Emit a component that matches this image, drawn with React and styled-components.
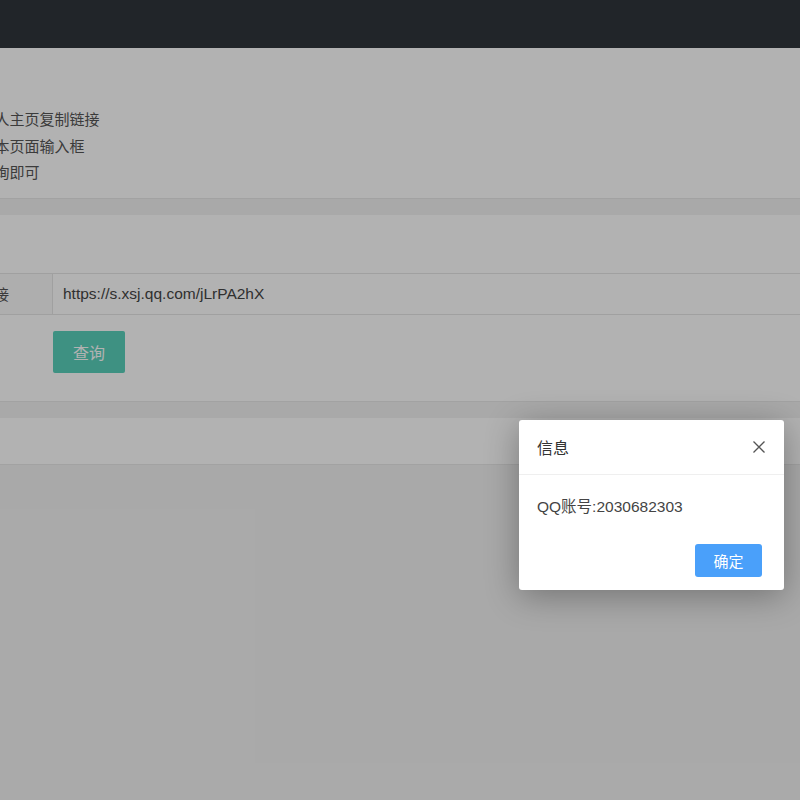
import styled, { createGlobalStyle } from "styled-components";

const GlobalStyle = createGlobalStyle`
  html, body {
    margin: 0;
    padding: 0;
    background: #f3f3f3;
    font-family: "Liberation Sans", "Noto Sans CJK SC", sans-serif;
    overflow: hidden;
  }
`;

const Page = styled.div`
  width: 800px;
  height: 800px;
  overflow: hidden;
  position: relative;
  background: #f3f3f3;
`;

const NavBar = styled.div`
  height: 48px;
  background: #30353b;
`;

const Cards = styled.div`
  display: flex;
  flex-direction: column;
  gap: 16px;
  margin-left: -78px;
  margin-right: -30px;
`;

const Card = styled.div`
  background: #fff;
  border-bottom: 1px solid #e8e8e8;
  padding: ${(p) => p.$pad || "0 15px"};
  min-height: ${(p) => p.$minHeight || "0"};
  box-sizing: border-box;
`;

const Steps = styled.div`
  color: #555;
  font-size: 15px;
  line-height: 26.5px;
`;

const InputGroup = styled.div`
  display: flex;
  height: 42px;
  border-top: 1px solid #e6e6e6;
  border-bottom: 1px solid #e6e6e6;
  box-sizing: border-box;
`;

const Addon = styled.div`
  width: 116px;
  flex: none;
  box-sizing: border-box;
  padding-left: 12px;
  display: flex;
  align-items: center;
  background: #fafafa;
  border-right: 1px solid #e6e6e6;
  color: #555;
  font-size: 15px;
`;

const Field = styled.div`
  flex: 1;
  display: flex;
  align-items: center;
  padding-left: 10px;
  color: #454545;
  font-size: 15.5px;
`;

const QueryButton = styled.button`
  margin: 16px 0 0 116px;
  width: 72px;
  height: 42px;
  border: none;
  border-radius: 2px;
  background: #59d0ba;
  color: #fff;
  font-family: "Noto Sans CJK SC", sans-serif;
  font-size: 16px;
  cursor: pointer;
`;

const Mask = styled.div`
  position: absolute;
  inset: 0;
  background: rgba(0, 0, 0, 0.3);
`;

const Dialog = styled.div`
  position: absolute;
  left: 519px;
  top: 420px;
  width: 265px;
  background: #fff;
  border-radius: 3px;
  box-shadow: 0 6px 34px rgba(0, 0, 0, 0.32);
`;

const DialogHead = styled.div`
  height: 55px;
  box-sizing: border-box;
  border-bottom: 1px solid #efefef;
  display: flex;
  align-items: center;
  justify-content: space-between;
  padding: 0 18px;
  color: #333;
  font-size: 16px;
  font-family: "Noto Sans CJK SC", sans-serif;
`;

const CloseBtn = styled.button`
  border: none;
  background: none;
  padding: 0;
  width: 14px;
  height: 14px;
  display: flex;
  cursor: pointer;
  margin-right: 0;
`;

const DialogBody = styled.div`
  padding: 20px 18px 0;
  color: #444;
  font-size: 15.5px;
  line-height: 24px;
`;

const DialogFoot = styled.div`
  display: flex;
  justify-content: flex-end;
  padding: 25px 22px 13px;
`;

const OkButton = styled.button`
  width: 67px;
  height: 33px;
  border: none;
  border-radius: 3px;
  background: #4aa0fa;
  color: #fff;
  font-family: "Noto Sans CJK SC", sans-serif;
  font-size: 15px;
  cursor: pointer;
`;

export default function App() {
  return (
    <Page>
      <GlobalStyle />
      <NavBar />
      <Cards>
        <Card $pad="59px 15px 11px">
          <Steps>
            <div>1.进入个人主页复制链接</div>
            <div>2.粘贴到本页面输入框</div>
            <div>3.点击查询即可</div>
          </Steps>
        </Card>
        <Card $pad="58px 15px 28px">
          <InputGroup>
            <Addon>分享链接</Addon>
            <Field>https://s.xsj.qq.com/jLrPA2hX</Field>
          </InputGroup>
          <QueryButton type="button">查询</QueryButton>
        </Card>
        <Card $minHeight="47px" />
      </Cards>
      <Mask />
      <Dialog>
        <DialogHead>
          <span>信息</span>
          <CloseBtn type="button" aria-label="close">
            <svg width="14" height="14" viewBox="0 0 14 14">
              <path d="M1.5 1.5 L12.5 12.5 M12.5 1.5 L1.5 12.5" stroke="#555" strokeWidth="1.3" />
            </svg>
          </CloseBtn>
        </DialogHead>
        <DialogBody>QQ账号:2030682303</DialogBody>
        <DialogFoot>
          <OkButton type="button">确定</OkButton>
        </DialogFoot>
      </Dialog>
    </Page>
  );
}
